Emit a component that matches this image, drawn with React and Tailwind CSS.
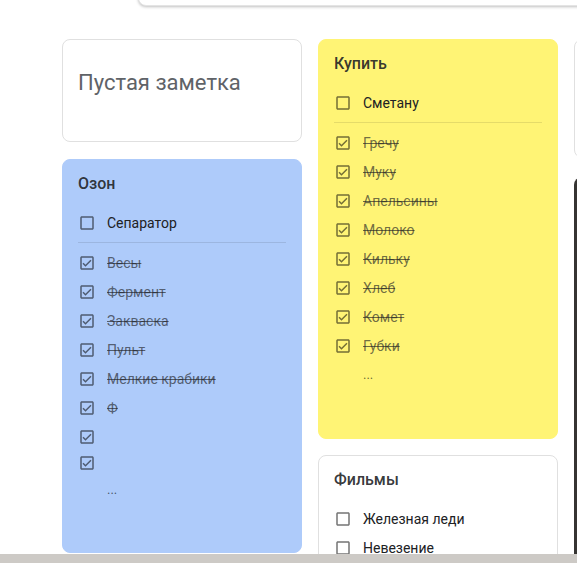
import React from "react";

const UNCHECKED =
  "M19 5v14H5V5h14m0-2H5c-1.1 0-2 .9-2 2v14c0 1.1.9 2 2 2h14c1.1 0 2-.9 2-2V5c0-1.1-.9-2-2-2z";
const CHECKED =
  "M19 3H5c-1.11 0-2 .9-2 2v14c0 1.1.89 2 2 2h14c1.11 0 2-.9 2-2V5c0-1.1-.89-2-2-2zm0 16H5V5h14v14zM17.99 9l-1.41-1.42-6.59 6.59-2.58-2.57-1.42 1.41 4 3.99z";

function Box({ checked }) {
  return (
    <svg width="18" height="18" viewBox="0 0 24 24" className="shrink-0 text-black/55" fill="currentColor">
      <path d={checked ? CHECKED : UNCHECKED} />
    </svg>
  );
}

function Row({ text, checked, h = "h-[29px]" }) {
  return (
    <div className={`flex items-center gap-[11px] ${h}`}>
      <Box checked={checked} />
      <span
        className={
          checked
            ? "text-[14px] leading-5 text-[#202124]/65 line-through"
            : "text-[14px] leading-5 text-[#202124]"
        }
      >
        {text}
      </span>
    </div>
  );
}

function More() {
  return (
    <div className="flex items-center h-[29px] pl-[29px] text-[13px] text-black/60 leading-5">...</div>
  );
}

function Title({ children }) {
  return <div className="text-[16px] leading-6 font-medium text-[#202124]/90">{children}</div>;
}

export default function App() {
  return (
    <div className="w-[577px] h-[563px] overflow-hidden bg-white flex flex-col" style={{ fontFamily: "Roboto, 'Noto Sans', sans-serif" }}>
      <div className="h-[554px] overflow-hidden shrink-0">
        <div className="ml-[138px] -mt-[42px] h-[48px] w-[480px] rounded-lg bg-white border border-[#e4e4e4] shadow-[0_1px_3px_rgba(0,0,0,0.25)]" />
        <div className="flex gap-4 pl-[62px] pt-[33px]">
          {/* Column 1 */}
          <div className="w-[240px] shrink-0 flex flex-col gap-[17px]">
            <div className="h-[103px] rounded-lg border border-[#e0e0e0] bg-white px-[15px] pt-[29px]">
              <div className="text-[22px] leading-7 text-[#5f6368]">Пустая заметка</div>
            </div>
            <div className="rounded-lg border border-[#aecbfa] bg-[#aecbfa] px-[15px] pt-[12px] pb-[48px]">
              <Title>Озон</Title>
              <div className="mt-[12px]">
                <Row text="Сепаратор" />
              </div>
              <div className="my-[5px] h-px bg-black/10" />
              <Row text="Весы" checked />
              <Row text="Фермент" checked />
              <Row text="Закваска " checked />
              <Row text="Пульт" checked />
              <Row text="Мелкие крабики " checked />
              <Row text="Ф" checked />
              <Row text="" checked />
              <Row text="" checked h="h-[24px]" />
              <More />
            </div>
          </div>
          {/* Column 2 */}
          <div className="w-[240px] shrink-0 flex flex-col gap-4">
            <div className="rounded-lg border border-[#fff475] bg-[#fff475] px-[15px] pt-[12px] pb-[49px]">
              <Title>Купить</Title>
              <div className="mt-[12px]">
                <Row text="Сметану" />
              </div>
              <div className="my-[5px] h-px bg-black/10" />
              <Row text="Гречу" checked />
              <Row text="Муку" checked />
              <Row text="Апельсины" checked />
              <Row text="Молоко" checked />
              <Row text="Кильку " checked />
              <Row text="Хлеб" checked />
              <Row text="Комет" checked />
              <Row text="Губки" checked />
              <More />
            </div>
            <div className="rounded-lg border border-[#e0e0e0] bg-white px-[15px] pt-[12px] pb-[40px]">
              <Title>Фильмы</Title>
              <div className="mt-[12px]">
                <Row text="Железная леди" />
                <Row text="Невезение" />
              </div>
            </div>
          </div>
          {/* Column 3 */}
          <div className="w-[240px] shrink-0 flex flex-col gap-4">
            <div className="h-[119px] rounded-lg border border-[#e0e0e0] bg-white" />
            <div className="mt-[3px] h-[400px] rounded-lg bg-[#363432]" />
          </div>
        </div>
      </div>
      <div className="flex-1 bg-[#cdcac6]" />
    </div>
  );
}
